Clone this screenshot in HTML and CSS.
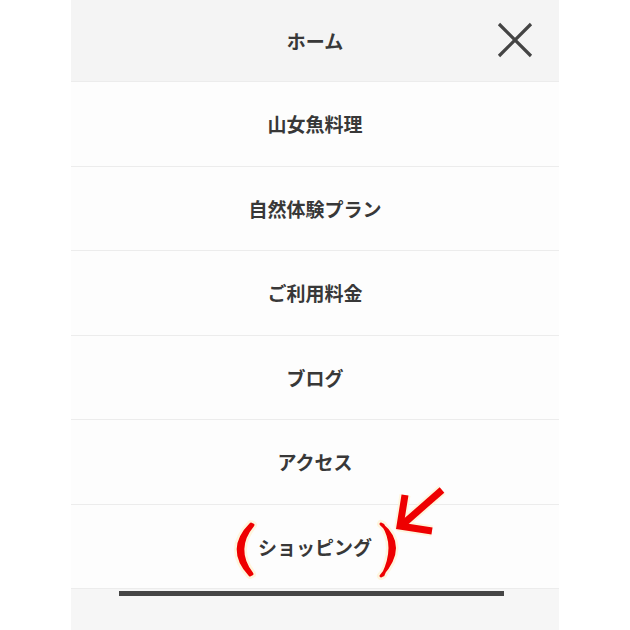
FILE: index.html
```html
<!DOCTYPE html>
<html lang="ja">
<head>
<meta charset="utf-8">
<link rel="stylesheet" href="styles.css">
</head>
<body>
<div class="page">
  <nav class="menu">
    <div class="menu-head">
      <span></span>
      <a class="menu-link" href="#">ホーム</a>
      <button class="close" aria-label="閉じる">
        <svg width="36" height="36" viewBox="0 0 36 36"><path d="M2 2L34 34M34 2L2 34" stroke="#444" stroke-width="3.2" fill="none"/></svg>
      </button>
    </div>
    <a class="menu-item" href="#">山女魚料理</a>
    <a class="menu-item" href="#">自然体験プラン</a>
    <a class="menu-item" href="#">ご利用料金</a>
    <a class="menu-item" href="#">ブログ</a>
    <a class="menu-item" href="#">アクセス</a>
    <a class="menu-item" href="#">ショッピング</a>
    <div class="menu-foot"><div class="scrollbar"></div></div>
  </nav>
  <svg class="marks" width="630" height="630" viewBox="0 0 630 630">
    <g stroke="#fff4d6" stroke-width="8" fill="#fff4d6" stroke-linejoin="round" stroke-linecap="round" opacity="0.8">
      <path d="M251 524Q226 549 250 575L252 574Q233 549 253 525Z"/>
      <path d="M381 524Q408 546 381 576L383 575Q397 546 383 525Z"/>
      <path d="M442 490L402 525M405 495L400 526L432 531" fill="none" stroke-width="11" stroke-linecap="butt"/>
    </g>
    <g fill="#ee0000" stroke="#ee0000" stroke-width="3" stroke-linejoin="round" stroke-linecap="round">
      <path d="M251 524Q226 549 250 575L252 574Q233 549 253 525Z"/>
      <path d="M381 524Q408 546 381 576L383 575Q397 546 383 525Z"/>
    </g>
    <g stroke="#ee0000" stroke-width="7" fill="none">
      <path d="M442 490L402 525"/>
      <path d="M405 495L400 526L432 531"/>
    </g>
  </svg>
</div>
</body>
</html>
```
FILE: styles.css
```css
html, body {
  margin: 0;
  padding: 0;
  background: #ffffff;
}
body {
  font-family: "Noto Sans CJK JP", "Noto Sans", sans-serif;
  color: #383838;
}
.page {
  position: relative;
  width: 630px;
  height: 630px;
  overflow: hidden;
}
.menu {
  margin-left: 71px;
  width: 488px;
  display: flex;
  flex-direction: column;
  background: #fdfdfd;
}
.menu-head {
  height: 82px;
  box-sizing: border-box;
  border-bottom: 1px solid #ececec;
  background: #f4f4f4;
  display: grid;
  grid-template-columns: 1fr auto 1fr;
  align-items: center;
}
.menu-link,
.menu-item {
  font-size: 19px;
  font-weight: 700;
  color: #383838;
  text-decoration: none;
  letter-spacing: 0;
}
.close {
  justify-self: end;
  margin-right: 26px;
  margin-top: -1px;
  width: 36px;
  height: 36px;
  padding: 0;
  border: 0;
  background: none;
  display: flex;
}
.menu-item {
  height: 84.5px;
  box-sizing: border-box;
  border-bottom: 1px solid #ececec;
  display: flex;
  align-items: center;
  justify-content: center;
}
.menu-foot {
  height: 41px;
  background: #f6f6f6;
  padding: 2px 0 0 48px;
  box-sizing: border-box;
}
.scrollbar {
  width: 385px;
  height: 5px;
  background: #454545;
}
.marks {
  position: absolute;
  left: 0;
  top: 0;
  pointer-events: none;
}
```
